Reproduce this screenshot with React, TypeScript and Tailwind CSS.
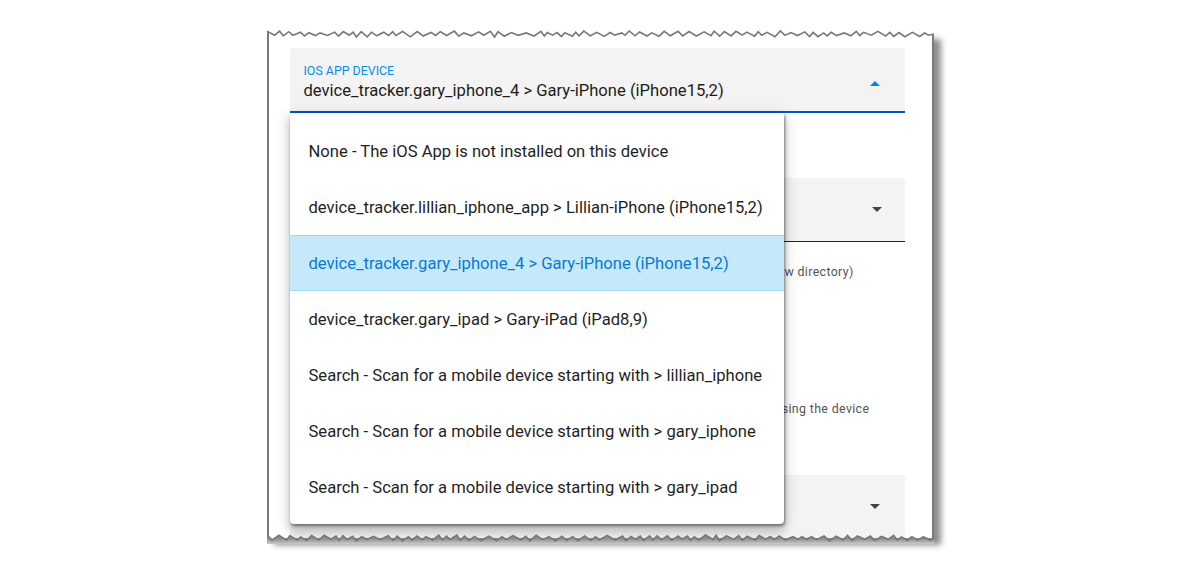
import React from "react";

const options = [
  "None - The iOS App is not installed on this device",
  "device_tracker.lillian_iphone_app > Lillian-iPhone (iPhone15,2)",
  "device_tracker.gary_iphone_4 > Gary-iPhone (iPhone15,2)",
  "device_tracker.gary_ipad > Gary-iPad (iPad8,9)",
  "Search - Scan for a mobile device starting with > lillian_iphone",
  "Search - Scan for a mobile device starting with > gary_iphone",
  "Search - Scan for a mobile device starting with > gary_ipad",
];

const selected = 2;

// jagged "torn paper" edge, deterministic so it doesn't jump around
function tornPoints(width: number, seed: number, base: number, amp: number) {
  let s = seed;
  const rand = () => {
    s = (s * 9301 + 49297) % 233280;
    return s / 233280;
  };
  const pts: Array<[number, number]> = [];
  let x = 0;
  let up = true;
  while (x < width) {
    pts.push([x, base + (up ? -1 : 1) * amp * (0.35 + rand() * 0.65)]);
    x += 3 + rand() * 5;
    up = !up;
  }
  pts.push([width, base]);
  return pts;
}

function TornEdge({ side }: { side: "top" | "bottom" }) {
  const w = 667;
  const pts = tornPoints(w, side === "top" ? 17 : 93, 6, 3);
  const line = pts.map(([x, y]) => `${x.toFixed(1)},${y.toFixed(1)}`).join(" ");
  const fill =
    side === "top"
      ? `0,0 ${line} ${w},0`
      : `0,12 ${line} ${w},12`;
  return (
    <svg
      width={w}
      height={12}
      viewBox={`0 0 ${w} 12`}
      className={
        side === "top"
          ? "absolute -top-[4px] -left-[2px]"
          : "absolute -bottom-[6px] -left-[2px]"
      }
    >
      <defs>
        <linearGradient id="tornShade" x1="0" y1="0" x2="0" y2="1">
          <stop offset="0.4" stopColor="#8d8d8d" />
          <stop offset="1" stopColor="#c9c9c9" />
        </linearGradient>
      </defs>
      <polygon points={fill} fill={side === "top" ? "#ffffff" : "url(#tornShade)"} />
      <polyline points={line} fill="none" stroke="#777777" strokeWidth={1.6} />
    </svg>
  );
}

function Caret({ up, color }: { up?: boolean; color: string }) {
  return (
    <svg width="24" height="24" viewBox="0 0 24 24" fill={color}>
      <path d={up ? "M7 14l5-5 5 5z" : "M7 10l5 5 5-5z"} />
    </svg>
  );
}

export default function App() {
  return (
    <div
      className="min-h-screen bg-white flex items-center justify-center"
      style={{ fontFamily: "Roboto, 'Liberation Sans', sans-serif" }}
    >
      <div className="relative w-[667px] h-[506px] bg-white border-x-2 border-[#7a7a7a] shadow-[7px_7px_6px_rgba(0,0,0,0.45)]">
        <div className="h-full overflow-hidden pl-[21px] pr-[27px] pt-[16px]">
          {/* iOS app device select (open) */}
          <div className="h-[65px] rounded-t-[4px] bg-[#f3f3f3] border-b-2 border-[#0052d4] flex items-center pl-[14px] pr-[18px]">
            <div className="flex-1 flex flex-col pt-[7px]">
              <span className="text-[12.4px] leading-[14px] text-[#0a8de6] uppercase">
                iOS App Device
              </span>
              <span className="text-[16.6px] leading-[22px] text-[#1c1c1c] mt-[2px]">
                device_tracker.gary_iphone_4 &gt; Gary-iPhone (iPhone15,2)
              </span>
            </div>
            <div className="mt-[10px]">
              <Caret up color="#0a80f0" />
            </div>
          </div>

          {/* next select, partly behind the menu */}
          <div className="mt-[65px] h-[64px] rounded-t-[4px] bg-[#f3f3f3] border-b border-[#222] flex items-center justify-end pl-[14px] pr-[16px]">
            <Caret color="#444444" />
          </div>
          <p className="mt-[22px] pl-[14px] text-[12.4px] leading-[16px] tracking-[0.35px] text-[#555]">
            Enter the name of the folder for the configuration files (leave this blank to use a new directory)
          </p>

          <p className="mt-[121px] pl-[14px] text-[12.4px] leading-[16px] tracking-[0.35px] text-[#555]">
            Locations are updated when the iOS device changes zones, or by scanning when using the device
          </p>

          {/* third select, cut off by the torn edge */}
          <div className="mt-[58px] h-[64px] rounded-t-[4px] bg-[#f3f3f3] border-b border-[#222] flex items-center justify-end pl-[14px] pr-[18px]">
            <Caret color="#444444" />
          </div>
        </div>

        {/* dropdown menu */}
        <ul className="absolute left-[21px] top-[81px] w-[494px] bg-white rounded-b-[4px] pt-[10px] pb-[9px] shadow-[1px_2px_3px_rgba(0,0,0,0.45),0_8px_10px_1px_rgba(0,0,0,0.14),0_3px_14px_2px_rgba(0,0,0,0.12)]">
          {options.map((o, i) => (
            <li
              key={o}
              className={
                i === selected
                  ? "h-[56px] flex items-center pl-[19px] pt-[3px] text-[16.6px] text-[#0a78d6] bg-[#c6e9fa] border-y border-[#a3daf5]"
                  : "h-[56px] flex items-center pl-[19px] pt-[3px] text-[16.6px] text-[#1f1f1f]"
              }
            >
              {o}
            </li>
          ))}
        </ul>

        <TornEdge side="top" />
        <TornEdge side="bottom" />
      </div>
    </div>
  );
}
